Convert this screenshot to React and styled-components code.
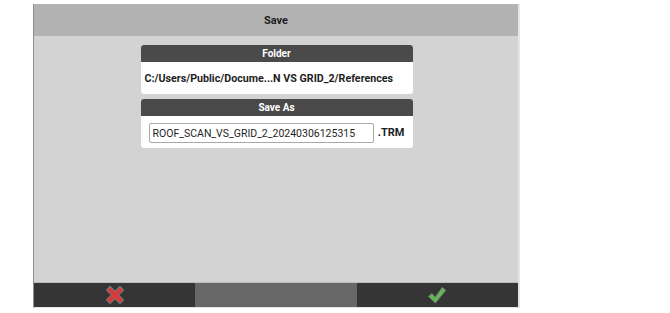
import React from 'react';
import styled, { createGlobalStyle } from 'styled-components';

const GlobalStyle = createGlobalStyle`
  body {
    margin: 0;
    background: #fff;
    font-family: Roboto, "Liberation Sans", sans-serif;
  }
`;

const Dialog = styled.div`
  margin: 4px 0 0 33px;
  width: 487px;
  height: 304px;
  display: flex;
  flex-direction: column;
  border-left: 1px solid #8f8f8f;
  border-right: 2px solid #e6e6e6;
  border-bottom: 1px solid #e6e6e6;
  box-sizing: border-box;
`;

const TitleBar = styled.div`
  height: 32px;
  background: #b3b3b3;
  display: flex;
  align-items: center;
  justify-content: center;
  font-size: 11px;
  font-weight: 700;
  color: #1e1e1e;
`;

const Body = styled.div`
  flex: 1;
  background: #d3d3d3;
  padding-top: 9px;
  display: flex;
  flex-direction: column;
  align-items: center;
  gap: 5px;
`;

const Card = styled.div`
  width: 272px;
  background: #fff;
  border-radius: 3px;
  overflow: hidden;
  margin-left: 1px;
`;

const CardHeader = styled.div`
  height: 17px;
  background: #4a4a4a;
  color: #fff;
  font-size: 10px;
  font-weight: 700;
  display: flex;
  align-items: center;
  justify-content: center;
`;

const CardBody = styled.div`
  height: ${p => p.$h}px;
  display: flex;
  align-items: center;
  padding: 0 ${p => p.$pad}px;
  gap: 4px;
`;

const PathText = styled.div`
  font-size: 10.7px;
  font-weight: 700;
  color: #1e1e1e;
  white-space: nowrap;
`;

const NameInput = styled.input`
  width: 227px;
  height: 20px;
  margin-top: 2px;
  box-sizing: border-box;
  border: 1px solid #a9a9a9;
  border-radius: 2px;
  padding: 0 3px;
  font-family: Roboto, "Liberation Sans", sans-serif;
  font-size: 10.5px;
  color: #1e1e1e;
  outline: none;
`;

const Ext = styled.span`
  font-size: 11px;
  font-weight: 700;
  color: #1e1e1e;
`;

const Footer = styled.div`
  height: 24px;
  display: grid;
  grid-template-columns: 1fr 1fr 1fr;
  border-top: 1px solid #bdbdbd;
`;

const FooterButton = styled.button`
  border: none;
  padding: 0;
  background: ${p => (p.$mid ? '#676767' : '#353535')};
  display: flex;
  align-items: center;
  justify-content: center;
`;

const CrossIcon = () => (
  <svg width="20" height="20" viewBox="0 0 20 20">
    <path
      transform="translate(10 10) rotate(45)"
      d="M2.6 2.6 L2.6 9.5 L-2.6 9.5 L-2.6 2.6 L-9.5 2.6 L-9.5 -2.6 L-2.6 -2.6 L-2.6 -9.5 L2.6 -9.5 L2.6 -2.6 L9.5 -2.6 L9.5 2.6 Z"
      fill="#d63a3a"
      stroke="#7a7a7a"
      strokeWidth="1"
      strokeLinejoin="round"
    />
  </svg>
);

const CheckIcon = () => (
  <svg width="20" height="20" viewBox="0 0 20 20">
    <path
      d="M1.5 11.5 L5 8.6 L8.2 12.2 L15.2 2.5 L18.8 5.2 L8.4 18 Z"
      fill="#5cba4e"
      stroke="#7a7a7a"
      strokeWidth="1"
      strokeLinejoin="round"
    />
  </svg>
);

export default function App() {
  return (
    <>
      <GlobalStyle />
      <Dialog>
        <TitleBar>Save</TitleBar>
        <Body>
          <Card>
            <CardHeader>Folder</CardHeader>
            <CardBody $h={32} $pad={4}>
              <PathText>C:/Users/Public/Docume...N VS GRID_2/References</PathText>
            </CardBody>
          </Card>
          <Card>
            <CardHeader>Save As</CardHeader>
            <CardBody $h={32} $pad={8}>
              <NameInput defaultValue="ROOF_SCAN_VS_GRID_2_20240306125315" />
              <Ext>.TRM</Ext>
            </CardBody>
          </Card>
        </Body>
        <Footer>
          <FooterButton><CrossIcon /></FooterButton>
          <FooterButton $mid />
          <FooterButton><CheckIcon /></FooterButton>
        </Footer>
      </Dialog>
    </>
  );
}
